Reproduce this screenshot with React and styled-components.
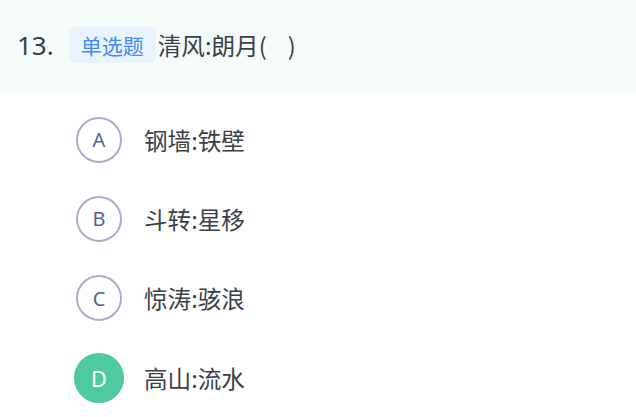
import React from 'react'
import styled, { createGlobalStyle } from 'styled-components'

const GlobalStyle = createGlobalStyle`
    body {
        margin: 0;
        background: #fff;
        font-family: "Noto Sans", "Noto Sans CJK SC", sans-serif;
    }
`

const Header = styled.div`
    height: 89px;
    background: #f5fbf9;
    display: flex;
    align-items: center;
    padding-left: 17px;
    color: #3a3f4a;
`

const Number = styled.span`
    font-size: 26px;
    margin-right: 15px;
`

const Tag = styled.span`
    display: inline-flex;
    align-items: center;
    height: 36px;
    padding: 0 12px;
    border-radius: 6px;
    background: #e8f3fc;
    color: #3f8cf4;
    font-size: 21px;
    font-family: "Noto Sans CJK SC", sans-serif;
    margin-right: 2px;
`

const Title = styled.span`
    font-size: 23.6px;
    font-family: "Noto Sans CJK SC", sans-serif;
    white-space: pre;
`

const List = styled.div`
    padding: 11px 0 0 76px;
`

const Row = styled.div`
    height: 79.3px;
    display: flex;
    align-items: center;
`

const Circle = styled.div`
    width: 46px;
    height: 46px;
    box-sizing: border-box;
    border-radius: 50%;
    display: flex;
    align-items: center;
    justify-content: center;
    font-size: 20px;
    border: ${p => p.active ? 'none' : '2px solid #abaec8'};
    background: ${p => p.active ? '#4fc99e' : '#fff'};
    color: ${p => p.active ? '#fff' : '#5a6293'};
    transform: ${p => p.active ? 'scale(1.09)' : 'none'};
    margin-right: 22px;
`

const OptionText = styled.span`
    font-size: 23.6px;
    color: #3a3f4a;
    font-family: "Noto Sans CJK SC", sans-serif;
`

const options = [
    { key: 'A', text: '钢墙:铁壁' },
    { key: 'B', text: '斗转:星移' },
    { key: 'C', text: '惊涛:骇浪' },
    { key: 'D', text: '高山:流水', active: true },
]

const App = () => {
    return (
        <>
            <GlobalStyle />
            <Header>
                <Number>13.</Number>
                <Tag>单选题</Tag>
                <Title>{'清风:朗月(    )'}</Title>
            </Header>
            <List>
                {options.map(o => (
                    <Row key={o.key}>
                        <Circle active={o.active}>{o.key}</Circle>
                        <OptionText>{o.text}</OptionText>
                    </Row>
                ))}
            </List>
        </>
    )
}

export default App
